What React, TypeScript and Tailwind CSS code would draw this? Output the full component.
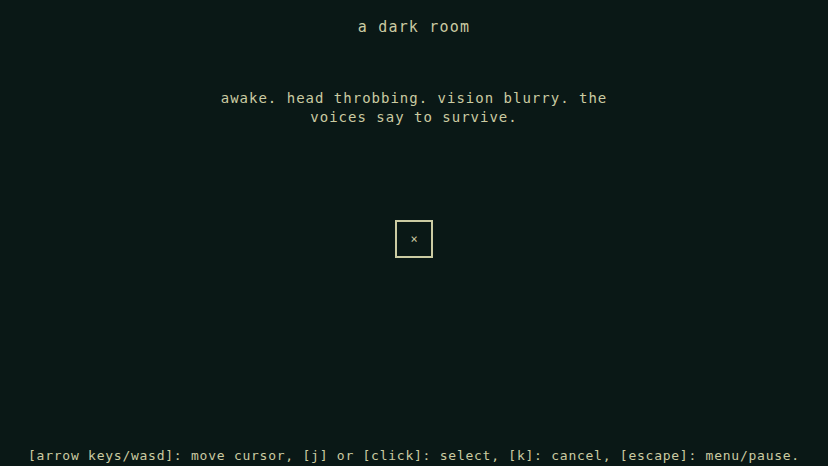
export default function App() {
  const font = { fontFamily: '"DejaVu Sans Mono", "Liberation Mono", monospace' }
  return (
    <div
      className="w-[828px] h-[466px] overflow-hidden bg-[#0a1816] text-[#cbcba2] flex flex-col items-center"
      style={font}
    >
      <div className="pt-[17px] text-[15px] leading-[20px] tracking-[1.2px]">a dark room</div>

      <div className="mt-[52px] w-[420px] text-center text-[14px] leading-[19px] tracking-[1px]">
        awake. head throbbing. vision blurry. the voices say to survive.
      </div>

      <div className="mt-[93px] w-[38px] h-[38px] border-2 border-[#cbcba2] flex items-center justify-center text-[12px] leading-none">
        ×
      </div>

      <div className="mt-auto pb-0 text-[13px] leading-[20px] tracking-[0.75px] whitespace-pre">
        [arrow keys/wasd]: move cursor, [j] or [click]: select, [k]: cancel, [escape]: menu/pause.
      </div>
    </div>
  )
}
